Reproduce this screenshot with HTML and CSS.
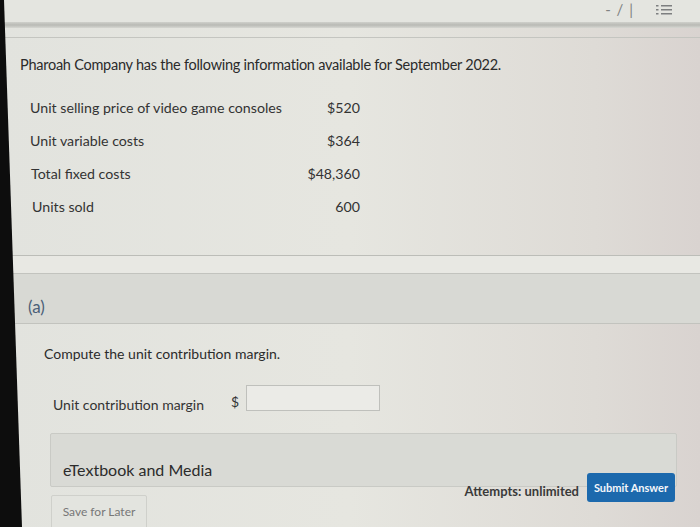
FILE: index.html
```html
<!DOCTYPE html>
<html>
<head>
<meta charset="utf-8">
<link rel="stylesheet" href="styles.css">
</head>
<body>
<div class="screen">
  <div class="topbar">
    <span class="nav">- / |</span>
    <svg class="listicon" width="16" height="12" viewBox="0 0 16 12">
      <g fill="#7d7f80">
        <rect x="0" y="1" width="2.5" height="1.5"/><rect x="5" y="1" width="11" height="1.5"/>
        <rect x="0" y="5" width="2.5" height="1.5"/><rect x="5" y="5" width="11" height="1.5"/>
        <rect x="0" y="9" width="2.5" height="1.5"/><rect x="5" y="9" width="11" height="1.5"/>
      </g>
    </svg>
  </div>
  <div class="rule-thick"></div>
  <div class="rule-thin"></div>

  <p class="intro">Pharoah Company has the following information available for September 2022.</p>

  <div class="data">
    <div class="row"><span class="lbl">Unit selling price of video game consoles</span><span class="val">$520</span></div>
    <div class="row"><span class="lbl">Unit variable costs</span><span class="val">$364</span></div>
    <div class="row"><span class="lbl">Total fixed costs</span><span class="val">$48,360</span></div>
    <div class="row"><span class="lbl">Units sold</span><span class="val">600</span></div>
  </div>

  <div class="sep"></div>
  <div class="part">(a)</div>

  <p class="question">Compute the unit contribution margin.</p>

  <div class="answer">
    <span class="alabel">Unit contribution margin</span>
    <span class="dollar">$</span>
    <span class="input"></span>
  </div>

  <div class="media">eTextbook and Media</div>

  <div class="footer">
    <button class="save">Save for Later</button>
    <div class="submitwrap">
      <span class="attempts">Attempts: unlimited</span>
      <button class="submit">Submit Answer</button>
    </div>
  </div>
</div>
</body>
</html>
```

FILE: styles.css
```css
html, body {
  margin: 0;
  padding: 0;
}
body {
  width: 700px;
  height: 527px;
  overflow: hidden;
  position: relative;
  font-family: Lato, "Liberation Sans", sans-serif;
  color: #333333;
  background: linear-gradient(90deg, #e2e3de 0%, #e6e6e0 50%, #dedbd6 85%, #d9d3d0 100%);
}
body::before {
  content: "";
  position: absolute;
  left: 0;
  top: 0;
  width: 22px;
  height: 527px;
  background: #0d0d0d;
  clip-path: polygon(0 0, 4px 0, 22px 100%, 0 100%);
  z-index: 5;
}
.screen {
  display: flex;
  flex-direction: column;
  height: 527px;
}
.screen > * {
  flex-shrink: 0;
}
.topbar {
  height: 22px;
  display: flex;
  justify-content: flex-end;
  align-items: center;
  gap: 22px;
  padding-right: 28px;
  background: #e4e5e0;
}
.nav {
  font-size: 15px;
  color: #808282;
  letter-spacing: 1px;
  margin-top: -4px;
}
.listicon {
  margin-top: -3px;
}
.rule-thick {
  height: 6px;
  background: linear-gradient(180deg, #cfd0cb, #b9bab5 50%, #d6d7d2);
}
.rule-thin {
  height: 1px;
  margin-top: 9px;
  background: #c4c5c0;
}
.intro {
  margin: 18px 0 0 20px;
  font-size: 14.5px;
  line-height: 18px;
  color: #2b2b2b;
  letter-spacing: -0.25px;
}
.data {
  margin: 25px 0 0 30px;
  width: 330px;
  display: flex;
  flex-direction: column;
  gap: 15px;
}
.row {
  display: flex;
  justify-content: space-between;
  font-size: 14.2px;
  line-height: 18px;
  color: #333;
}
.row:nth-child(3) { margin-left: 1px; }
.row:nth-child(4) { margin-left: 2px; }
.sep {
  margin-top: 39px;
  height: 1px;
  background: #bcbdb8;
  border-bottom: 17px solid #e8e8e3;
}
.part {
  height: 51px;
  display: flex;
  align-items: center;
  padding-left: 28px;
  padding-top: 16px;
  box-sizing: border-box;
  font-size: 17px;
  color: #4b5f78;
  background: #d8d9d4;
  border-top: 1px solid #c2c3be;
  border-bottom: 1px solid #c2c3be;
}
.question {
  margin: 21px 0 0 44px;
  font-size: 14px;
  line-height: 18px;
  color: #2b2b2b;
}
.answer {
  margin: 22px 0 0 53px;
  display: flex;
  align-items: center;
  height: 26px;
}
.alabel {
  font-size: 14px;
  color: #333;
  margin-top: 12px;
}
.dollar {
  font-size: 14px;
  margin-left: 27px;
  color: #333;
  margin-top: 6px;
}
.input {
  width: 132px;
  height: 24px;
  margin-left: 7px;
  border: 1px solid #bfc0bc;
  background: #ebebe7;
}
.media {
  margin: 22px 23px 0 50px;
  height: 54px;
  padding-left: 12px;
  padding-top: 18px;
  box-sizing: border-box;
  display: flex;
  align-items: center;
  font-size: 16px;
  color: #2b2b2b;
  background: #d9dad5;
  border: 1px solid #c9cac5;
  border-radius: 2px;
}
.footer {
  display: flex;
  justify-content: space-between;
  align-items: flex-start;
  margin: 0 25px 0 51px;
}
.save {
  margin-top: 8px;
  width: 96px;
  height: 36px;
  font-family: Lato, "Liberation Sans", sans-serif;
  font-size: 12px;
  color: #777;
  background: #e3e4df;
  border: 1px solid #cfd0cb;
  border-radius: 2px;
  padding: 0 0 4px 0;
}
.submitwrap {
  display: flex;
  align-items: center;
  gap: 8px;
  margin-top: -14px;
}
.attempts {
  font-size: 13px;
  font-weight: bold;
  color: #3a3a3a;
  margin-top: 6px;
}
.submit {
  width: 88px;
  height: 29px;
  font-family: Lato, "Liberation Sans", sans-serif;
  font-size: 11px;
  font-weight: bold;
  color: #f4f7fa;
  background: #1c69ad;
  border: none;
  border-radius: 3px;
  padding: 0;
}
```
